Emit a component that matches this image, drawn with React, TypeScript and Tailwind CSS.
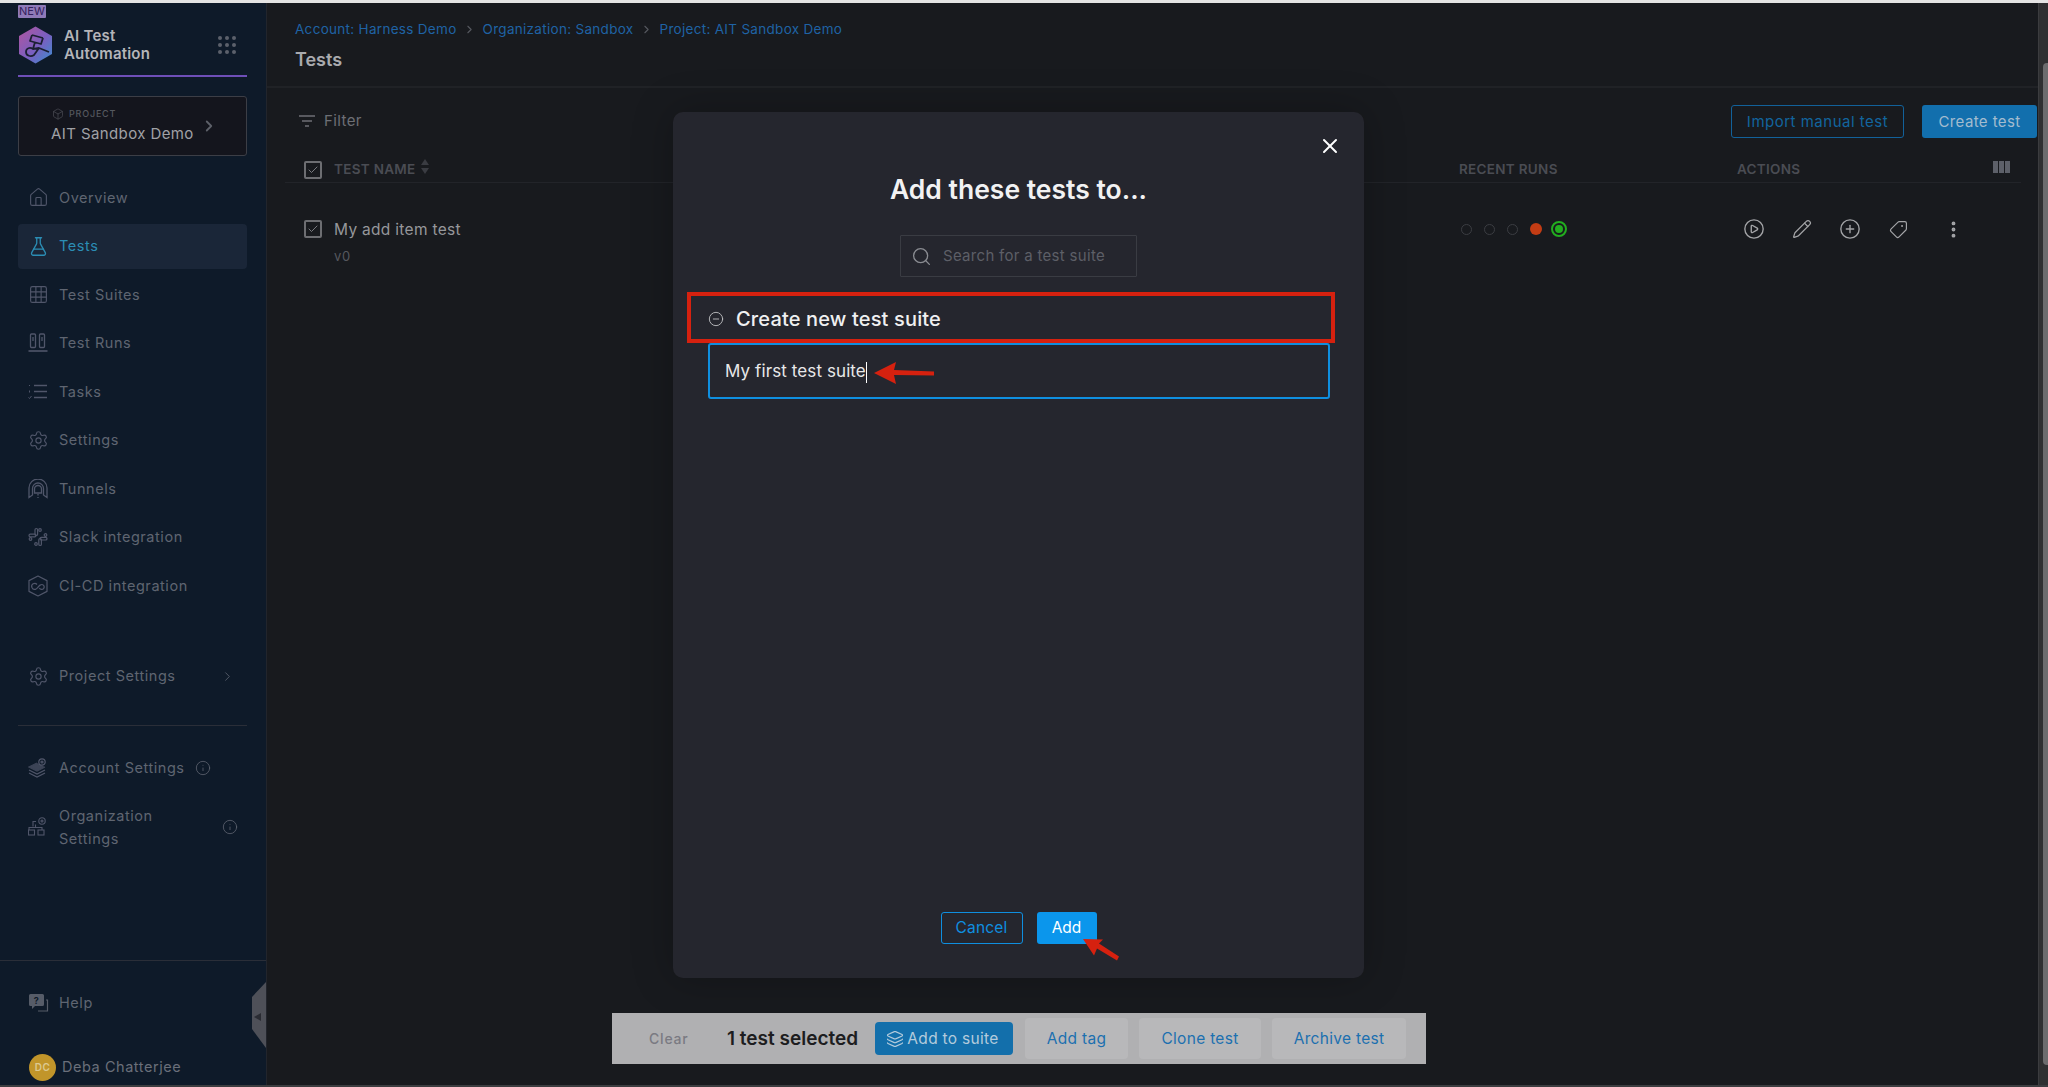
import React from "react";
import {
  House, FlaskConical, Grid3x3, Settings, Info, ChevronRight, Box, Search, X,
  CirclePlay, Pencil, CirclePlus, Tag, EllipsisVertical, Check, CircleMinus, Layers,
} from "lucide-react";

function TestRunsIcon() {
  return (
    <svg width="20" height="20" viewBox="0 0 20 20" fill="none" stroke="currentColor" strokeWidth="1.3">
      <rect x="2.5" y="1" width="5" height="13.5" rx="1" />
      <rect x="11.5" y="1" width="5" height="13.5" rx="1" />
      <path d="M5 4v4M14 4v4" />
      <path d="M0.5 18h19" strokeWidth="1.6" />
    </svg>
  );
}
function TasksIcon() {
  return (
    <svg width="20" height="16" viewBox="0 0 20 16" fill="none" stroke="currentColor" strokeWidth="1.3">
      <path d="M6 1.500h13M6 7.500h13M6 13.500h13" />
      <path d="M1.500 1v1M1.500 6.500v2" strokeWidth="1" />
      <path d="M0.500 13.500l1 1 2-2.500" strokeWidth="1" />
    </svg>
  );
}
function TunnelIcon() {
  return (
    <svg width="20" height="20" viewBox="0 0 20 20" fill="none" stroke="currentColor" strokeWidth="1.3">
      <path d="M1 18.5V9a9 9 0 0 1 18 0v9.5L15.5 16V9.5a5.5 5.5 0 0 0-11 0V16z" />
      <path d="M6.5 14V10a3.5 3.5 0 0 1 7 0v4z" />
      <path d="M10 15v4" strokeDasharray="1.5 1.5" />
    </svg>
  );
}
function SlackIcon() {
  return (
    <svg width="20" height="20" viewBox="0 0 20 20" fill="none" stroke="currentColor" strokeWidth="1.2">
      <rect x="7" y="1.5" width="2.6" height="7" rx="1.3" />
      <rect x="10.8" y="11.5" width="2.6" height="7" rx="1.3" />
      <rect x="1" y="7.2" width="7" height="2.6" rx="1.3" />
      <rect x="12" y="10.4" width="7" height="2.6" rx="1.3" />
      <circle cx="12" cy="3" r="1.3" />
      <circle cx="8" cy="17" r="1.3" />
      <circle cx="2.5" cy="12" r="1.3" />
      <circle cx="17.5" cy="8" r="1.3" />
    </svg>
  );
}
function CiCdIcon() {
  return (
    <svg width="22" height="22" viewBox="0 0 22 22" fill="none" stroke="currentColor" strokeWidth="1.2">
      <path d="M11 1l9 4.6v10.8L11 21l-9-4.6V5.6z" strokeLinejoin="round" />
      <path d="M10 9.5a3 3 0 1 0-1.5 4.8c2-.6 3-3.6 5-4.4a2.4 2.4 0 1 1 1 4.4c-1 0-1.800-.6-2.200-1.300" />
    </svg>
  );
}
function AccountIcon() {
  return (
    <svg width="20" height="20" viewBox="0 0 20 20" fill="none" stroke="currentColor" strokeWidth="1.2">
      <path d="M9 5L1 9l8 4 8-4" fill="currentColor" opacity=".7" />
      <path d="M1 12l8 4 8-4M1 15l8 4 8-4" />
      <circle cx="14" cy="4" r="3.200" />
      <circle cx="14" cy="4" r="1" />
    </svg>
  );
}
function OrgIcon() {
  return (
    <svg width="20" height="20" viewBox="0 0 20 20" fill="none" stroke="currentColor" strokeWidth="1.1">
      <path d="M8 4.500H5v5M1 13v-2.500h13V13M7.500 7.500v3" />
      <rect x="0.500" y="13" width="6" height="5" />
      <rect x="10" y="13" width="6" height="5" />
      <circle cx="14" cy="4" r="3.200" />
      <circle cx="14" cy="4" r="1" />
    </svg>
  );
}
function HelpIcon() {
  return (
    <svg width="21" height="20" viewBox="0 0 21 20" fill="none">
      <path d="M2.500 1h12a1.500 1.500 0 0 1 1.500 1.500v9a1.500 1.500 0 0 1-1.500 1.500H7l-3 3v-3H2.500A1.500 1.500 0 0 1 1 11.500v-9A1.500 1.500 0 0 1 2.500 1z" fill="#565c68" />
      <path d="M18 7h1.500v11H10" stroke="#565c68" strokeWidth="1.200" />
      <text x="8.500" y="10.500" textAnchor="middle" fontSize="9" fontWeight="700" fill="#0e1a29" fontFamily="Inter, sans-serif">?</text>
    </svg>
  );
}
function Logo() {
  return (
    <svg width="35" height="38" viewBox="0 0 35 38" fill="none">
      <defs>
        <linearGradient id="lg" x1="0" y1="0" x2="1" y2="1">
          <stop offset="0" stopColor="#b1559e" />
          <stop offset="0.55" stopColor="#7a5fc0" />
          <stop offset="1" stopColor="#3a8fd0" />
        </linearGradient>
      </defs>
      <path d="M17.500 0.500L34 10v18L17.500 37.500 1 28V10z" fill="url(#lg)" />
      <path d="M14 9l11 3M14 9l-2 6 11 3 2-6M17 16l-2 7M21 22l10 4M15 23c-3-2-7-1-7 3s5 5 8 3l5-7z" stroke="#1b1f33" strokeWidth="1.800" strokeLinejoin="round" />
    </svg>
  );
}

const navItems: { label: string; icon: React.ReactNode; active?: boolean }[] = [
  { label: "Overview", icon: <House size={21} strokeWidth={1.3} /> },
  { label: "Tests", icon: <FlaskConical size={21} strokeWidth={1.5} />, active: true },
  { label: "Test Suites", icon: <Grid3x3 size={21} strokeWidth={1.3} /> },
  { label: "Test Runs", icon: <TestRunsIcon /> },
  { label: "Tasks", icon: <TasksIcon /> },
  { label: "Settings", icon: <Settings size={21} strokeWidth={1.3} /> },
  { label: "Tunnels", icon: <TunnelIcon /> },
  { label: "Slack integration", icon: <SlackIcon /> },
  { label: "CI-CD integration", icon: <CiCdIcon /> },
];

function NavRow({ label, icon, active }: { label: string; icon: React.ReactNode; active?: boolean }) {
  return (
    <div
      className={`flex h-[45px] mb-[3.5px] items-center rounded-[4px] pl-[9px] text-[14.500px] tracking-[0.55px] ${
        active ? "bg-[#1a2638] text-[#2b8db4]" : "text-[#5f6571]"
      }`}
    >
      <span className={`flex w-[22px] justify-center ${active ? "text-[#2b8db4]" : "text-[#50566a]"}`}>{icon}</span>
      <span className="ml-[10px]">{label}</span>
    </div>
  );
}

function Sidebar() {
  return (
    <aside className="relative flex h-full w-[267px] shrink-0 flex-col border-r border-[#22252c] bg-[#0e1a29]">
      <div className="relative ml-[18px] mr-[19px] flex h-[74px] items-center border-b-2 border-[#6e4fb8]">
        <span className="absolute left-0 top-[2px] rounded-[1px] bg-[#8f7ab8] px-[1px] text-[11px] leading-[13px] text-[#33205c]">NEW</span>
        <div className="mt-[12px] flex w-full items-center">
          <Logo />
          <div className="ml-[11px] text-[15px] font-semibold leading-[18px] tracking-[0.2px] text-[#b4b5b9]">
            AI Test
            <br />
            Automation
          </div>
          <div className="ml-auto mr-[11px] grid grid-cols-3 gap-[3px]">
            {Array.from({ length: 9 }).map((_, i) => (
              <span key={i} className="h-[4px] w-[4px] rounded-full bg-[#5b606b]" />
            ))}
          </div>
        </div>
      </div>
      <div className="ml-[18px] mr-[19px] mt-[19px] flex h-[60px] items-center rounded-[3px] border border-[#3c3e46] bg-[#14151d] pl-[32px] pr-[28px]">
        <div className="flex-1">
          <div className="flex items-center gap-[5px] text-[9px] font-medium tracking-[0.8px] text-[#55585f]">
            <Box size={12} strokeWidth={1.2} className="ml-[1px]" />
            PROJECT
          </div>
          <div className="mt-[2px] whitespace-nowrap text-[15px] tracking-[0.4px] text-[#a0a1a6]">AIT Sandbox Demo</div>
        </div>
        <ChevronRight size={18} strokeWidth={2.400} className="shrink-0 text-[#5d6069]" />
      </div>
      <nav className="ml-[18px] mr-[19px] mt-[19px]">
        {navItems.map((n) => (
          <NavRow key={n.label} {...n} />
        ))}
      </nav>
      <div className="ml-[18px] mr-[19px] mt-[42px]">
        <div className="flex h-[45px] items-center pl-[9px] text-[14.500px] tracking-[0.55px] text-[#5f6571]">
          <span className="flex w-[22px] justify-center text-[#50566a]"><Settings size={21} strokeWidth={1.3} /></span>
          <span className="ml-[10px]">Project Settings</span>
          <ChevronRight size={15} strokeWidth={1.3} className="ml-auto mr-[12px]" />
        </div>
      </div>
      <div className="ml-[18px] mr-[19px] mt-[26px] border-t border-[#2a2e38]" />
      <div className="ml-[18px] mr-[19px] mt-[20px]">
        <div className="flex h-[45px] items-center pl-[9px] text-[14.500px] tracking-[0.55px] text-[#5f6571]">
          <span className="flex w-[22px] justify-center text-[#50566a]"><AccountIcon /></span>
          <span className="ml-[10px]">Account Settings</span>
          <Info size={16} strokeWidth={1.2} className="ml-[10px]" />
        </div>
        <div className="mt-[7px] flex h-[58px] items-center pl-[9px] text-[14.500px] leading-[23px] tracking-[0.55px] text-[#5f6571]">
          <span className="flex w-[22px] justify-center text-[#50566a]"><OrgIcon /></span>
          <span className="ml-[10px]">Organization<br />Settings</span>
          <Info size={16} strokeWidth={1.2} className="ml-auto mr-[9px]" />
        </div>
      </div>
      <div className="mt-auto border-t border-[#2a2e38]">
        <div className="ml-[18px] mr-[19px] mt-[19px] flex h-[45px] items-center pl-[10px] text-[14.500px] tracking-[0.55px] text-[#5f6571]">
          <span className="flex w-[21px] justify-center"><HelpIcon /></span>
          <span className="ml-[10px]">Help</span>
        </div>
        <div className="ml-[18px] mr-[19px] mt-[27px] mb-[3px] flex h-[30px] items-center pl-[11px] text-[14.500px] tracking-[0.55px] text-[#6a6f7a]">
          <span className="flex h-[27px] w-[27px] items-center justify-center rounded-full bg-[#c1952a] text-[10px] font-semibold text-[#dcc990]">DC</span>
          <span className="ml-[6px]">Deba Chatterjee</span>
        </div>
      </div>
      <svg className="absolute right-0 top-[979px]" width="14" height="66" viewBox="0 0 14 66">
        <path d="M14 0L0 15v32l14 19z" fill="#4e5058" />
        <path d="M2 35l7-4v8z" fill="#2a2c33" />
      </svg>
    </aside>
  );
}

function Box18({ className = "" }: { className?: string }) {
  return (
    <span className={`flex h-[18px] w-[18px] shrink-0 items-center justify-center rounded-[2px] border-2 border-[#6d6e72] ${className}`}>
      <Check size={12} strokeWidth={1.8} className="text-[#85868a]" />
    </span>
  );
}

function MainPage() {
  return (
    <main className="flex h-full min-w-0 flex-1 flex-col bg-[#181a1e]">
      <header className="h-[85px] shrink-0 border-b-2 border-[#202226] pl-[28px] pt-[17px]">
        <div className="flex items-center text-[13.500px] leading-[18px] tracking-[0.3px] text-[#1f63a5]">
          <span>Account: Harness Demo</span>
          <ChevronRight size={13} className="mx-[6.500px] text-[#55585f]" />
          <span>Organization: Sandbox</span>
          <ChevronRight size={13} className="mx-[6.500px] text-[#55585f]" />
          <span>Project: AIT Sandbox Demo</span>
        </div>
        <div className="mt-[10px] text-[18px] font-semibold leading-[24px] text-[#a9aaae]">Tests</div>
      </header>
      <div className="flex h-[73px] shrink-0 items-start pt-[17px]">
        <div className="ml-[32px] mt-[5px] flex items-center text-[15px] tracking-[0.4px] text-[#6d6f75]">
          <svg width="16" height="12" viewBox="0 0 16 12" fill="none" stroke="#6d6f75" strokeWidth="1.400">
            <path d="M0 1h16M3 6h10M6 11h4" />
          </svg>
          <span className="ml-[9px]">Filter</span>
        </div>
        <div className="ml-auto mr-[1px] flex gap-[18px]">
          <span className="flex h-[33px] w-[173px] items-center justify-center rounded-[3px] border border-[#12619a] pt-[1px] text-[15px] tracking-[0.5px] text-[#12659f]">Import manual test</span>
          <span className="flex h-[33px] w-[115px] items-center justify-center rounded-[3px] bg-[#126fad] pt-[1px] text-[15px] tracking-[0.4px] text-[#a3bccf]">Create test</span>
        </div>
      </div>
      <div className="ml-[18px] mr-[17px] flex h-[22px] shrink-0 items-start border-b border-[#222429]">
        <Box18 className="ml-[19px]" />
        <span className="ml-[12px] text-[13.500px] font-semibold leading-[16px] tracking-[0.3px] text-[#4a4c53]">TEST NAME</span>
        <span className="ml-[5px] -mt-[2px] flex flex-col gap-[3px]">
          <svg width="8" height="6" viewBox="0 0 8 6"><path d="M4 0l4 6H0z" fill="#3a3c42" /></svg>
          <svg width="8" height="6" viewBox="0 0 8 6"><path d="M4 6l4-6H0z" fill="#3a3c42" /></svg>
        </span>
        <span className="ml-auto w-[278px] text-[13.500px] font-semibold leading-[16px] tracking-[0.3px] text-[#4a4c53]">RECENT RUNS</span>
        <span className="w-[256px] text-[13.500px] font-semibold leading-[16px] tracking-[0.3px] text-[#4a4c53]">ACTIONS</span>
        <span className="mr-[11px] grid grid-cols-3 gap-[1px]">
          <span className="h-[12px] w-[5px] bg-[#5d6069]" />
          <span className="h-[12px] w-[5px] bg-[#5d6069]" />
          <span className="h-[12px] w-[5px] bg-[#5d6069]" />
        </span>
      </div>
      <div className="ml-[18px] mr-[17px] mt-[37px] flex items-start">
        <Box18 className="ml-[19px]" />
        <div className="ml-[12px] pt-[1px]">
          <div className="text-[15.500px] leading-[18px] tracking-[0.3px] text-[#96979b]">My add item test</div>
          <div className="mt-[8px] text-[13px] leading-[18px] tracking-[0.8px] text-[#56585e]">v0</div>
        </div>
        <div className="ml-auto mt-[1px] flex w-[278px] items-center">
          <span className="ml-[2px] h-[11px] w-[11px] rounded-full border border-[#3b3d42]" />
          <span className="ml-[12px] h-[11px] w-[11px] rounded-full border border-[#3b3d42]" />
          <span className="ml-[12px] h-[11px] w-[11px] rounded-full border border-[#3b3d42]" />
          <span className="ml-[12px] h-[12px] w-[12px] rounded-full bg-[#c33c14]" />
          <span className="ml-[9px] flex h-[16px] w-[16px] items-center justify-center rounded-full border-2 border-[#22ad1f]">
            <span className="h-[8px] w-[8px] rounded-full bg-[#22ad1f]" />
          </span>
        </div>
        <div className="-mt-[2px] flex h-[22px] w-[284px] items-center pl-[6px] text-[#a3a4a7]">
          <CirclePlay size={22} strokeWidth={1.500} className="shrink-0" />
          <Pencil size={20} strokeWidth={1.500} className="ml-[27px] shrink-0" />
          <CirclePlus size={22} strokeWidth={1.500} className="ml-[27px] shrink-0" />
          <Tag size={19} strokeWidth={1.500} className="ml-[28px] shrink-0 rotate-90" />
          <EllipsisVertical size={21} strokeWidth={2.400} className="ml-[35px] shrink-0" />
        </div>
      </div>
    </main>
  );
}

function Modal() {
  return (
    <div className="absolute left-[673px] top-[112px] flex h-[866px] w-[691px] flex-col rounded-[10px] bg-[#25262e] shadow-[0_0_40px_rgba(0,0,0,0.25)]">
      <X size={24} strokeWidth={2} className="absolute right-[22px] top-[22px] text-white" />
      <h2 className="mt-[61px] text-center text-[26.500px] font-semibold leading-[32px] text-[#f2f2f3]">Add these tests to...</h2>
      <div className="mx-auto mt-[30px] flex h-[42px] w-[237px] items-center rounded-[1px] border border-[#3a3c43] pl-[10px]">
        <Search size={21} strokeWidth={1.500} className="text-[#8a8c92]" />
        <span className="ml-[11px] pt-[1px] text-[15px] tracking-[0.3px] text-[#5d5f67]">Search for a test suite</span>
      </div>
      <div className="mx-[14px] mt-[15px] flex h-[51px] w-[648px] items-center border-[4px] border-[#d6210f] pl-[17px] pt-[2px]">
        <CircleMinus size={16} strokeWidth={1.300} className="text-[#c5c6c9]" />
        <span className="ml-[12px] text-[20px] font-medium tracking-[0.15px] text-[#f0f0f1]">Create new test suite</span>
      </div>
      <div className="relative ml-[35px] flex h-[56px] w-[622px] items-center rounded-[3px] border-2 border-[#0f8fe0] pl-[15px] pt-[2px]">
        <span className="text-[17px] tracking-[0.1px] text-[#e8e8e9]">My first test suite</span>
        <span className="h-[21px] w-[1px] bg-white" />
      </div>
      <div className="mt-auto mb-[34px] flex justify-center gap-[14px]">
        <span className="flex h-[32px] w-[82px] items-center justify-center rounded-[3px] border border-[#0f8fe0] text-[15.500px] tracking-[0.2px] text-[#0f8fe0]">Cancel</span>
        <span className="flex h-[32px] w-[60px] items-center justify-center rounded-[3px] bg-[#0b96ec] text-[15.500px] text-white">Add</span>
      </div>
    </div>
  );
}

function SelectedBar() {
  return (
    <div className="absolute left-[612px] top-[1013px] flex h-[51px] w-[814px] items-center bg-[#b0b0b2]">
      <span className="ml-[37px] w-[40px] text-[14px] font-medium tracking-[0.8px] text-[#7a7a82]">Clear</span>
      <span className="ml-[38px] w-[130px] whitespace-nowrap text-[19px] font-semibold leading-none text-[#1d1d20]">1 test selected</span>
      <span className="ml-[18px] flex h-[33px] w-[138px] items-center justify-center gap-[3px] rounded-[4px] bg-[#136fab] pr-[3px] text-[15.500px] tracking-[0.3px] text-[#b3cbdc]">
        <Layers size={18} strokeWidth={1.500} />
        Add to suite
      </span>
      <span className="ml-[12px] flex h-[41px] w-[103px] items-center justify-center rounded-[4px] bg-[#b8b8ba] text-[15.500px] tracking-[0.3px] text-[#1c70b0]">Add tag</span>
      <span className="ml-[11px] flex h-[41px] w-[122px] items-center justify-center rounded-[4px] bg-[#b8b8ba] text-[15.500px] tracking-[0.3px] text-[#1c70b0]">Clone test</span>
      <span className="ml-[11px] flex h-[41px] w-[134px] items-center justify-center rounded-[4px] bg-[#b8b8ba] text-[15.500px] tracking-[0.3px] text-[#1c70b0]">Archive test</span>
    </div>
  );
}

function Arrows() {
  return (
    <>
      <svg className="absolute left-[874px] top-[361px]" width="62" height="24" viewBox="0 0 62 24">
        <path d="M0 12L22 1l-2 8 40 1.500v4L20 14l2 9z" fill="#d6210f" />
      </svg>
      <svg className="absolute left-[1082px] top-[938px]" width="40" height="24" viewBox="0 0 40 24">
        <path d="M1 1l20 .5-4 4 20 13-2 4-20-12-3 7z" fill="#d6210f" />
      </svg>
    </>
  );
}

export default function App() {
  return (
    <div className="relative flex h-[1087px] w-[2048px] flex-col overflow-hidden bg-[#181a1e] font-[Inter,sans-serif]">
      <div className="h-[3px] shrink-0 bg-[#e4e4e4]" />
      <div className="flex min-h-0 flex-1">
        <Sidebar />
        <MainPage />
        <div className="w-[10px] shrink-0 border-l border-[#3b3c3f] bg-[#2f3032] pl-[4px] pt-[60px]">
          <div className="h-[1002px] w-full rounded-l-[4px] bg-[#6c6c6e]" />
        </div>
      </div>
      <div className="h-[2px] shrink-0 bg-[#3c3d40]" />
      <Modal />
      <SelectedBar />
      <Arrows />
    </div>
  );
}
